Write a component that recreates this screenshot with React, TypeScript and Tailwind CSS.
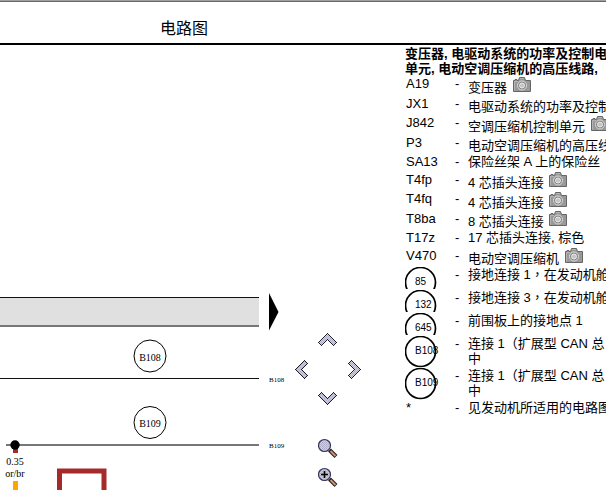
import clsx from 'clsx';

interface Part {
  code: string;
  name: string;
  camera?: boolean;
}

interface Joint {
  code: string;
  lines: string[];
  full?: boolean;
}

const parts: Part[] = [
  { code: 'A19', name: '变压器', camera: true },
  { code: 'JX1', name: '电驱动系统的功率及控制电', camera: true },
  { code: 'J842', name: '空调压缩机控制单元', camera: true },
  { code: 'P3', name: '电动空调压缩机的高压线', camera: true },
  { code: 'SA13', name: '保险丝架 A 上的保险丝' },
  { code: 'T4fp', name: '4 芯插头连接', camera: true },
  { code: 'T4fq', name: '4 芯插头连接', camera: true },
  { code: 'T8ba', name: '8 芯插头连接', camera: true },
  { code: 'T17z', name: '17 芯插头连接, 棕色' },
  { code: 'V470', name: '电动空调压缩机', camera: true },
];

const joints: Joint[] = [
  { code: '85', lines: ['接地连接 1，在发动机舱'] },
  { code: '132', lines: ['接地连接 3，在发动机舱'] },
  { code: '645', lines: ['前围板上的接地点 1'] },
  { code: 'B108', lines: ['连接 1（扩展型 CAN 总', '中'], full: true },
  { code: 'B109', lines: ['连接 1（扩展型 CAN 总', '中'], full: true },
];

function CameraIcon() {
  return (
    <svg width="18" height="15" viewBox="0 0 18 15" className="ml-0.5 inline-block align-baseline" aria-hidden="true">
      <path
        d="M.5 3.5H2V2.5H4V3.5H5.5L6.5 .5H11.5L12.5 3.5H17.5V14.5H.5Z"
        fill="#999"
        stroke="#666"
        strokeWidth="1"
      />
      <path d="M1.5 4.5H5M1.5 4.5V13.5M7 1.5H11" stroke="#b4b4b4" fill="none" />
      <circle cx="9" cy="8.5" r="4.5" fill="#858585" stroke="#dedede" strokeWidth="1" />
      <circle cx="9" cy="8.5" r="2.5" fill="#c4c4c4" stroke="#ececec" strokeWidth="1" />
    </svg>
  );
}

function JointSymbol({ code, full }: { code: string; full?: boolean }) {
  return (
    <div className={clsx('overflow-hidden', full ? 'h-8' : 'h-[22px]')}>
      <svg width="40" height="32" viewBox="0 0 40 32" className="block">
        <circle cx="15.5" cy="15.5" r="15" fill="none" stroke="#000" strokeWidth="1.7" />
        <text x="10" y="18" fontSize="10">
          {code}
        </text>
      </svg>
    </div>
  );
}

function IconDefs() {
  return (
    <svg width="0" height="0" className="absolute" aria-hidden="true">
      <defs>
        <pattern id="dither" width="2" height="2" patternUnits="userSpaceOnUse">
          <rect width="2" height="2" fill="#cfcfe0" />
          <rect width="1" height="1" fill="#adadc8" />
          <rect x="1" y="1" width="1" height="1" fill="#b4b4d2" />
        </pattern>
      </defs>
    </svg>
  );
}

const chevrons = {
  up: 'M.5 10.5L9.5 1.5L18.5 10.5L15.5 13.5L9.5 7.5L3.5 13.5Z',
  down: 'M.5 3.5L3.5 .5L9.5 6.5L15.5 .5L18.5 3.5L9.5 12.5Z',
  left: 'M1.5 10.5L10.5 1.5L13.5 4.5L7.5 10.5L13.5 16.5L10.5 19.5Z',
  right: 'M14.5 10.5L5.5 1.5L2.5 4.5L8.5 10.5L2.5 16.5L5.5 19.5Z',
};

function Chevron({ dir }: { dir: keyof typeof chevrons }) {
  const vertical = dir === 'up' || dir === 'down';
  const w = vertical ? 20 : 16;
  const h = vertical ? 14 : 20;
  return (
    <svg width={w} height={h} viewBox={`0 0 ${w} ${h}`} className="block" shapeRendering="crispEdges">
      <path d={chevrons[dir]} fill="url(#dither)" stroke="#1c1c2c" strokeWidth="1" />
    </svg>
  );
}

function Magnifier({ plus }: { plus?: boolean }) {
  return (
    <svg width="20" height="20" viewBox="0 0 20 20" className="block">
      <path d="M11.5 12L18 18.5" stroke="#2b1a14" strokeWidth="4" />
      <path d="M12.5 13L17.5 18" stroke="#c4987a" strokeWidth="2" />
      <circle cx="6.5" cy="7.5" r="6" fill="url(#dither)" stroke="#34345c" strokeWidth="1.2" />
      {plus && <path d="M3 7.5H10M6.5 4V11" stroke="#000" strokeWidth="1.6" />}
    </svg>
  );
}

function Diagram() {
  return (
    <svg
      width="294"
      height="445"
      viewBox="0 45 294 445"
      className="block shrink-0 font-['Liberation_Serif',serif]"
      fontSize="10"
    >
      {/* bus bar */}
      <rect x="0" y="298" width="259" height="27" fill="#e0e0e0" />
      <rect x="0" y="297" width="259" height="1" fill="#111" />
      <rect x="0" y="325" width="259" height="2" fill="#777" />
      <path d="M269 293L278.5 312L269 330.5Z" />

      {/* B108 */}
      <circle cx="150" cy="356" r="16" fill="none" stroke="#000" />
      <text x="150" y="361" textAnchor="middle">B108</text>
      <rect x="0" y="378" width="259" height="1" fill="#111" />
      <text x="269" y="382" fontSize="7">B108</text>

      {/* B109 */}
      <circle cx="150" cy="422.5" r="16" fill="none" stroke="#000" />
      <text x="150" y="427" textAnchor="middle">B109</text>
      <rect x="6" y="444" width="253" height="2" fill="#777" />
      <text x="269" y="448" fontSize="7">B109</text>

      {/* or/br wire */}
      <rect x="13" y="448" width="5" height="5" fill="#a52a2a" />
      <circle cx="15" cy="445" r="4.7" />
      <text x="15" y="465" textAnchor="middle">0.35</text>
      <text x="15" y="477" textAnchor="middle">or/br</text>
      <rect x="13" y="481" width="5" height="9" fill="#ffa500" />
      <path d="M59.5 490V471H104V490" fill="none" stroke="#a52a2a" strokeWidth="5" />
    </svg>
  );
}

function Controls() {
  return (
    <nav className="w-[111px] shrink-0 pt-[287px]">
      <div className="grid grid-cols-[16px_20px_16px] gap-x-2 gap-y-[13px]">
        <button type="button" aria-label="up" className="col-start-2">
          <Chevron dir="up" />
        </button>
        <button type="button" aria-label="left" className="col-start-1">
          <Chevron dir="left" />
        </button>
        <button type="button" aria-label="right" className="col-start-3">
          <Chevron dir="right" />
        </button>
        <button type="button" aria-label="down" className="col-start-2">
          <Chevron dir="down" />
        </button>
      </div>
      <div className="mt-8 ml-6 flex w-5 flex-col gap-[9px]">
        <button type="button" aria-label="zoom">
          <Magnifier />
        </button>
        <button type="button" aria-label="zoom in">
          <Magnifier plus />
        </button>
      </div>
    </nav>
  );
}

function Legend() {
  return (
    <section className="min-w-0 flex-1 overflow-hidden pt-px text-[13px] leading-4">
      <h2 className="font-bold whitespace-nowrap leading-[15px]">
        变压器, 电驱动系统的功率及控制电
        <br />
        单元, 电动空调压缩机的高压线路,
      </h2>
      <table className="w-full table-fixed border-collapse">
        <colgroup>
          <col className="w-[50px]" />
          <col className="w-[13px]" />
          <col />
        </colgroup>
        <tbody>
          {parts.map((part) => (
            <tr key={part.code} className={part.camera ? 'odd:h-5 even:h-[19px]' : 'h-[18px]'}>
              <td className="p-0 pl-px align-top">{part.code}</td>
              <td className="p-0 align-top">-</td>
              <td
                className={clsx(
                  'overflow-hidden p-0 whitespace-nowrap',
                  part.camera ? 'align-bottom' : 'align-top',
                )}
              >
                {part.name} {part.camera && <CameraIcon />}
              </td>
            </tr>
          ))}
        </tbody>
        <tbody>
          {joints.map((joint) => (
            <tr key={joint.code} className={joint.full ? 'h-8' : 'h-[23px]'}>
              <td className="p-0 align-top">
                <JointSymbol code={joint.code} full={joint.full} />
              </td>
              <td className="p-0 align-top">-</td>
              <td className="overflow-hidden p-0 align-top font-['Liberation_Sans','Noto_Sans_CJK_TC',sans-serif] leading-[15px] whitespace-nowrap">
                {joint.lines.map((line) => (
                  <div key={line}>{line}</div>
                ))}
              </td>
            </tr>
          ))}
          <tr>
            <td className="p-0 pl-px align-top">*</td>
            <td className="p-0 align-top">-</td>
            <td className="overflow-hidden p-0 align-top whitespace-nowrap">见发动机所适用的电路图</td>
          </tr>
        </tbody>
      </table>
    </section>
  );
}

export default function App() {
  return (
    <div className="overflow-hidden bg-white font-['Liberation_Sans','Noto_Sans_CJK_SC',sans-serif] text-black">
      <IconDefs />
      <div className="h-px bg-[#a0a0a0]" />
      <div className="h-px bg-[#696969]" />
      <header className="border-b-2 border-black pt-[15px] pb-[2px] pl-40">
        <h1 className="text-base leading-6">电路图</h1>
      </header>
      <main className="flex">
        <Diagram />
        <Controls />
        <Legend />
      </main>
    </div>
  );
}
